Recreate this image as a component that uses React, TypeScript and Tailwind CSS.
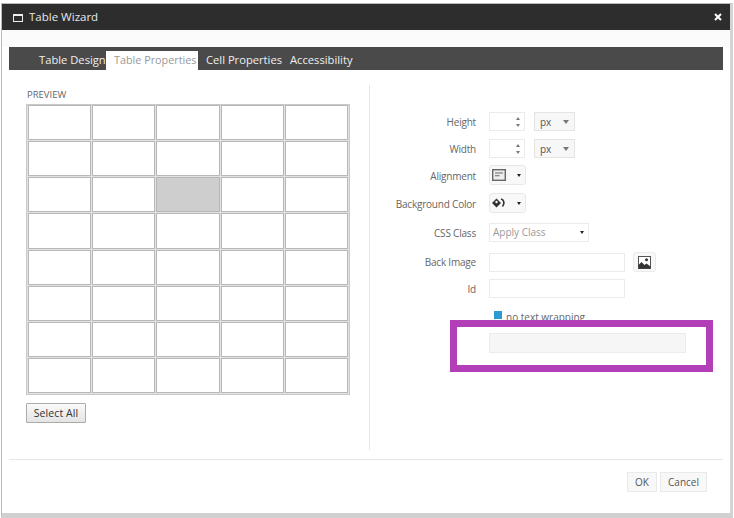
import React from 'react';

const rows = Array.from({ length: 8 }, (_, r) => r);
const cols = Array.from({ length: 5 }, (_, c) => c);

const Spinner = () => (
  <div className="w-[36px] h-[19px] border border-[#ebebeb] bg-white flex flex-col items-end justify-center gap-[4px] pr-[4px]">
    <div className="w-0 h-0 border-x-[2.5px] border-x-transparent border-b-[3px] border-b-[#777]" />
    <div className="w-0 h-0 border-x-[2.5px] border-x-transparent border-t-[3px] border-t-[#777]" />
  </div>
);

const UnitSelect = () => (
  <div className="w-[41px] h-[19px] border border-[#e4e4e4] bg-[#f7f7f7] flex items-center justify-between pl-[5px] pr-[3px] text-[#555]">
    <span className="leading-none">px</span>
    <div className="w-0 h-0 mr-[2px] border-x-[3.5px] border-x-transparent border-t-[4px] border-t-[#777]" />
  </div>
);

const IconDrop = ({ children }: { children: React.ReactNode }) => (
  <div className="w-[37px] h-[20px] border border-[#e8e8e8] rounded-[3px] bg-[#f8f8f8] flex items-center justify-between pl-[2px] pr-[3px]">
    {children}
    <div className="w-0 h-0 mr-[1px] border-x-[2.5px] border-x-transparent border-t-[3px] border-t-[#222]" />
  </div>
);

const Row = ({ label, className, labelClass = 'pt-[1px]', children }: { label: string; className: string; labelClass?: string; children: React.ReactNode }) => (
  <div className={`flex items-center ${className}`}>
    <div className={`w-[119px] text-right pr-[13px] text-[#666] whitespace-nowrap tracking-[-0.2px] ${labelClass}`}>{label}</div>
    {children}
  </div>
);

export default function App() {
  return (
    <div
      className="relative w-[734px] h-[518px] bg-white pl-[1px] pt-[3px] overflow-hidden text-[11px]"
      style={{ fontFamily: '"Open Sans", "Liberation Sans", sans-serif' }}
    >
      <div className="w-[732px] h-[515px] bg-white border-l border-t border-r-[3px] border-b-[5px] border-l-[#bbb] border-t-[#bbb] border-r-[#d4d4d4] border-b-[#d0d0d0] flex flex-col">
        {/* title bar */}
        <div className="h-[26px] shrink-0 bg-[#2d2d2d] flex items-center justify-between pl-[11px] pr-[8px] text-white">
          <div className="flex items-center gap-[6px]">
            <div className="w-[10px] h-[8px] mt-[2px] border border-[#eee] border-t-[2px]" />
            <span className="text-[11.5px] text-[#e8e8e8]">Table Wizard</span>
          </div>
          <svg width="8" height="8" viewBox="0 0 8 8" className="stroke-white" strokeWidth="2">
            <path d="M1 1l6 6M7 1l-6 6" />
          </svg>
        </div>

        {/* tabs */}
        <div className="h-[17px] shrink-0 bg-[#fbfbfb]" />
        <div className="h-[23px] shrink-0 ml-[7px] mr-[7px] bg-[#4a4a4a] flex items-end pl-[30px] text-[11.2px] text-[#efefef]">
          <span className="h-[19px] pt-[1px] w-[67px] whitespace-nowrap">Table Design</span>
          <span className="h-[19px] pt-[1px] w-[92px] bg-white text-[#999] text-[10.8px] pl-[8px] whitespace-nowrap">Table Properties</span>
          <span className="h-[19px] pt-[1px] pl-[8px] whitespace-nowrap">Cell Properties</span>
          <span className="h-[19px] pt-[1px] pl-[8px] whitespace-nowrap">Accessibility</span>
        </div>

        {/* body */}
        <div className="flex h-[389px] shrink-0">
          <div className="w-[367px] shrink-0 pl-[24px] pt-[18px]">
            <div className="pl-[1px] text-[9.5px] leading-[13px] text-[#666] mb-[4px]">PREVIEW</div>
            <div className="w-[324px] h-[291px] -mt-px border border-[#c8c8c8] bg-[#e2e2e2] px-[1px] pb-[1px] flex flex-col gap-[1px]">
              {rows.map((r) => (
                <div key={r} className="flex-1 flex gap-[1px]">
                  {cols.map((c) => (
                    <div
                      key={c}
                      className={`flex-1 border border-[#b8b8b8] ${r === 2 && c === 2 ? 'bg-[#cecece]' : 'bg-white'}`}
                    />
                  ))}
                </div>
              ))}
            </div>
            <button className="mt-[8px] w-[60px] h-[20px] pt-[1px] border border-[#aaa] rounded-[1px] bg-gradient-to-b from-[#fafafa] to-[#e4e4e4] text-[#333] text-[10.5px] tracking-[0.1px]">
              Select All
            </button>
          </div>
          <div className="w-px h-[365px] mt-[15px] shrink-0 bg-[#e6e6e6]" />
          <div className="flex-1 text-[10px]">
            <Row label="Height" className="mt-[42px]">
              <div className="flex gap-[9px]">
                <Spinner />
                <UnitSelect />
              </div>
            </Row>
            <Row label="Width" className="mt-[8px]">
              <div className="flex gap-[9px]">
                <Spinner />
                <UnitSelect />
              </div>
            </Row>
            <Row label="Alignment" labelClass="pt-[3px]" className="mt-[7px]">
              <IconDrop>
                <svg width="14" height="12" viewBox="0 0 14 12" fill="#eee" stroke="#666" strokeWidth="1.4">
                  <rect x="0.7" y="0.7" width="12.6" height="10.6" />
                  <path d="M3 4h8M3 6.8h4.5" fill="none" strokeWidth="1.1" />
                </svg>
              </IconDrop>
            </Row>
            <Row label="Background Color" labelClass="pt-[3px]" className="mt-[8px]">
              <IconDrop>
                <svg width="14" height="10" viewBox="0 0 14 10">
                  <path d="M0 5l4.5-4.5L9 5 4.5 9.5z" fill="#333" />
                  <circle cx="4.5" cy="4" r="1.2" fill="#f8f8f8" />
                  <path d="M9 1c3 .8 4 4.5 1.5 7.5" fill="none" stroke="#333" strokeWidth="1.7" />
                </svg>
              </IconDrop>
            </Row>
            <Row label="CSS Class" className="mt-[10px]">
              <div className="w-[100px] h-[19px] border border-[#ebebeb] flex items-center justify-between pl-[3px] pr-[4px] text-[#999]">
                <span>Apply Class</span>
                <div className="w-0 h-0 border-x-[2.5px] border-x-transparent border-t-[3px] border-t-[#222]" />
              </div>
            </Row>
            <Row label="Back Image" className="mt-[10px]">
              <div className="w-[136px] h-[19px] border border-[#ebebeb]" />
              <div className="ml-[8px] w-[23px] h-[20px] border border-[#ebebeb] rounded-[3px] bg-[#f8f8f8] flex items-center justify-center">
                <svg width="13" height="13" viewBox="0 0 13 13">
                  <rect x="0.5" y="0.5" width="12" height="12" fill="#fff" stroke="#555" />
                  <circle cx="8.5" cy="3.8" r="1.5" fill="#333" />
                  <path d="M0.5 12.5V9l3-3 3 3 2-1.5 4 3v2z" fill="#333" />
                </svg>
              </div>
            </Row>
            <Row label="Id" className="mt-[7px]">
              <div className="w-[136px] h-[19px] border border-[#ebebeb]" />
            </Row>
            <div className="mt-[13px] ml-[124px] flex items-center gap-[4px] text-[#666] leading-[10px] h-[8px]">
              <div className="w-[8px] h-[8px] bg-[#2b9bd3] shrink-0" />
              <span className="whitespace-nowrap mt-[4px]">no text wrapping</span>
            </div>
            <div className="mt-[14px] ml-[119px] w-[197px] h-[20px] border border-[#ececec] bg-[#f6f6f6]" />
          </div>
        </div>

        {/* footer */}
        <div className="h-px shrink-0 mx-[7px] bg-[#e6e6e6]" />
        <div className="flex justify-end gap-[3px] pr-[23px] pt-[12px] text-[10px] text-[#555]">
          <div className="w-[30px] h-[20px] border border-[#eaeaea] bg-[#f8f8f8] flex items-center justify-center">OK</div>
          <div className="w-[47px] h-[20px] border border-[#eaeaea] bg-[#f8f8f8] flex items-center justify-center">Cancel</div>
        </div>
      </div>

      {/* purple highlight drawn over the screenshot */}
      <div className="absolute left-[450px] top-[320px] w-[263px] h-[52px] border-[7px] border-[#b23fb7]" />
    </div>
  );
}
